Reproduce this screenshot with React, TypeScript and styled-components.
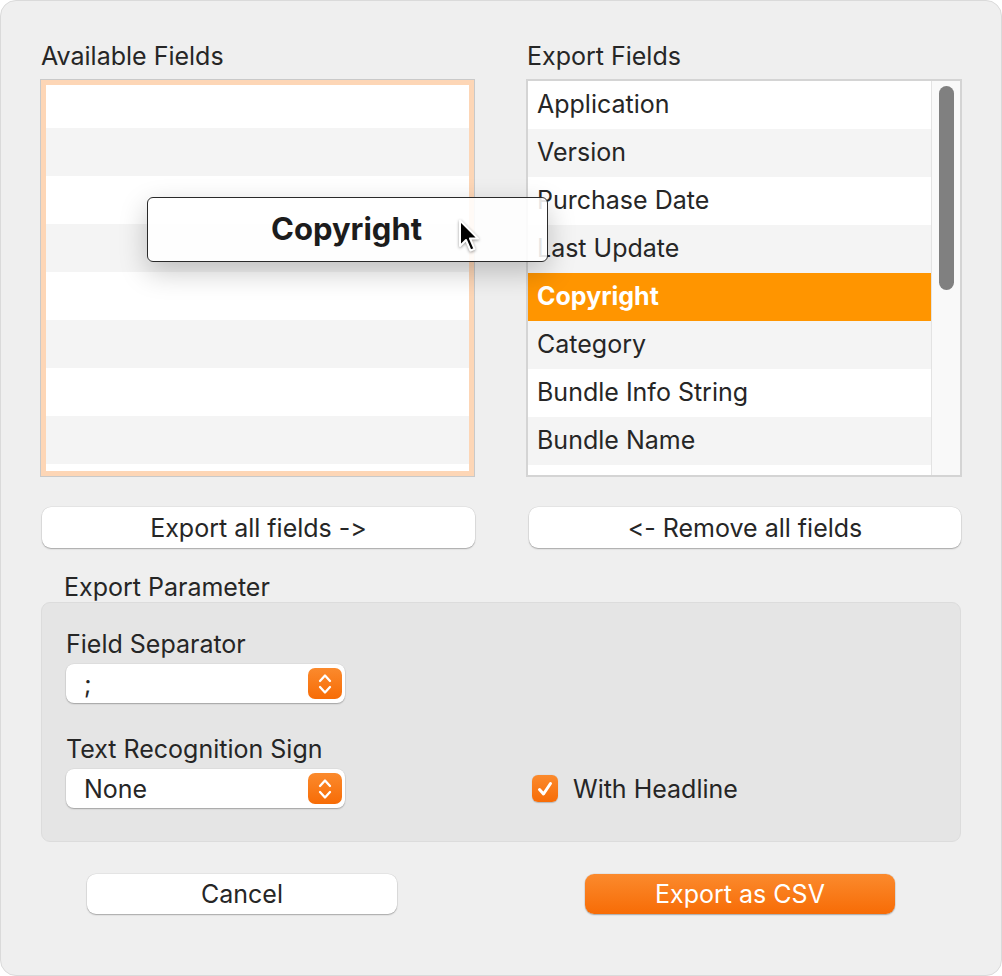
import React from "react";
import styled, { createGlobalStyle } from "styled-components";

const GlobalStyle = createGlobalStyle`
  html, body {
    margin: 0;
    padding: 0;
    background: #ffffff;
  }
  body {
    font-family: Inter, "Noto Sans", "Liberation Sans", sans-serif;
    font-feature-settings: "calt" 0, "liga" 0;
    -webkit-font-smoothing: antialiased;
  }
  button {
    font-feature-settings: "calt" 0, "liga" 0;
  }
`;

const Window = styled.div`
  position: relative;
  box-sizing: border-box;
  width: 1002px;
  height: 976px;
  padding: 42px 40px 0 40px;
  background: #efefef;
  border: 1px solid #dadada;
  border-radius: 16px;
  overflow: hidden;
  color: #262626;
  font-size: 25px;
`;

const Columns = styled.div`
  display: grid;
  grid-template-columns: 435px 436px;
  column-gap: 51px;
  margin-left: -1px;
`;

const Column = styled.div`
  display: flex;
  flex-direction: column;
`;

const Label = styled.div`
  height: 26px;
  line-height: 26px;
  padding-left: 1px;
  margin-bottom: 10px;
`;

const ListBox = styled.div<{ $focused?: boolean }>`
  position: relative;
  box-sizing: border-box;
  height: 398px;
  display: flex;
  background: #ffffff;
  border: ${({ $focused }) => ($focused ? "1px solid #c9c9c9" : "2px solid #d4d4d4")};
  overflow: hidden;

  &::after {
    content: "";
    position: absolute;
    inset: 0;
    pointer-events: none;
    box-shadow: ${({ $focused }) => ($focused ? "inset 0 0 0 5px #fdd6b6" : "none")};
  }
`;

const Rows = styled.div`
  flex: 1;
  display: flex;
  flex-direction: column;
`;

const Row = styled.div<{ $odd?: boolean; $selected?: boolean }>`
  flex: 0 0 48px;
  height: 48px;
  line-height: 47px;
  padding-left: 9px;
  box-sizing: border-box;
  white-space: nowrap;
  background: ${({ $odd, $selected }) =>
    $selected ? "#ff9500" : $odd ? "#f4f4f4" : "#ffffff"};
  color: ${({ $selected }) => ($selected ? "#ffffff" : "#262626")};
  font-weight: ${({ $selected }) => ($selected ? 700 : 400)};
`;

const ScrollTrack = styled.div`
  flex: 0 0 29px;
  background: #f9f9f9;
  border-left: 1px solid #e3e3e3;
  padding: 5px 0 0 7px;
  box-sizing: border-box;
`;

const ScrollThumb = styled.div`
  width: 15px;
  height: 204px;
  border-radius: 8px;
  background: #808080;
`;

const ButtonRow = styled.div`
  display: grid;
  grid-template-columns: 433px 432px;
  column-gap: 54px;
  margin-top: 30px;
  margin-left: 1px;
`;

const PushButton = styled.button<{ $primary?: boolean }>`
  height: 41px;
  padding: 0;
  border: none;
  border-radius: 9px;
  font-family: inherit;
  font-size: 25px;
  color: ${({ $primary }) => ($primary ? "#ffffff" : "#262626")};
  background: ${({ $primary }) =>
    $primary ? "linear-gradient(#fb8a2d, #f76c06)" : "#ffffff"};
  box-shadow: 0 1px 1.5px rgba(0, 0, 0, 0.28), 0 0 0 0.5px rgba(0, 0, 0, 0.08);
`;

const SectionTitle = styled.div`
  height: 26px;
  line-height: 26px;
  margin: 26px 0 2px 23px;
`;

const GroupBox = styled.div`
  box-sizing: border-box;
  height: 240px;
  padding: 28px 24px 0 24px;
  background: #e5e5e5;
  border: 1px solid #dcdcdc;
  border-radius: 9px;
  display: grid;
  grid-template-columns: 466px 1fr;
  grid-template-rows: auto auto;
  align-content: start;
  row-gap: 33px;
`;

const Field = styled.div`
  display: flex;
  flex-direction: column;
  gap: 7px;
`;

const FieldLabel = styled.div`
  height: 26px;
  line-height: 26px;
`;

const Select = styled.div`
  box-sizing: border-box;
  width: 279px;
  height: 39px;
  padding: 0 3px 0 18px;
  display: flex;
  align-items: center;
  justify-content: space-between;
  background: #ffffff;
  border-radius: 8px;
  box-shadow: 0 1px 1.5px rgba(0, 0, 0, 0.28), 0 0 0 0.5px rgba(0, 0, 0, 0.06);
`;

const Stepper = styled.div`
  width: 34px;
  height: 31px;
  border-radius: 7px;
  background: linear-gradient(#fb8a2d, #f76c06);
  display: flex;
  align-items: center;
  justify-content: center;
`;

const CheckCell = styled.label`
  align-self: end;
  height: 39px;
  display: flex;
  align-items: center;
  gap: 15px;
`;

const CheckBox = styled.span`
  width: 26px;
  height: 27px;
  border-radius: 6px;
  background: linear-gradient(#fb8a2d, #f76c06);
  display: flex;
  align-items: center;
  justify-content: center;
  box-shadow: 0 0.5px 1px rgba(0, 0, 0, 0.2);
`;

const Footer = styled.div`
  display: flex;
  gap: 188px;
  margin: 32px 0 0 46px;

  & > button {
    width: 310px;
    height: 40px;
  }
`;

const DragImage = styled.div`
  position: absolute;
  left: 146px;
  top: 196px;
  box-sizing: border-box;
  width: 401px;
  height: 65px;
  background: rgba(255, 255, 255, 0.88);
  border: 1px solid #2a2a2a;
  border-radius: 6px;
  box-shadow: 0 10px 28px rgba(0, 0, 0, 0.22);
  display: flex;
  align-items: center;
  justify-content: center;
  padding: 0 2px 2px 0;
  font-size: 31px;
  font-weight: 700;
  color: #1c1c1c;
`;

const Cursor = styled.svg`
  position: absolute;
  left: 457px;
  top: 218px;
  filter: drop-shadow(0 1px 1.5px rgba(0, 0, 0, 0.4));
`;

const availableRows = 8;
const exportFields = [
  "Application",
  "Version",
  "Purchase Date",
  "Last Update",
  "Copyright",
  "Category",
  "Bundle Info String",
  "Bundle Name",
  "",
];

const Chevrons = () => (
  <svg width="16" height="26" viewBox="0 0 16 26">
    <path
      d="M3 10 L8 4.5 L13 10 M3 16 L8 21.5 L13 16"
      fill="none"
      stroke="#ffffff"
      strokeWidth="2.3"
      strokeLinecap="round"
      strokeLinejoin="round"
    />
  </svg>
);

export default function App() {
  return (
    <>
      <GlobalStyle />
      <Window>
        <Columns>
          <Column>
            <Label>Available Fields</Label>
            <ListBox $focused>
              <Rows>
                {Array.from({ length: availableRows + 1 }).map((_, i) => (
                  <Row key={i} $odd={i % 2 === 1} />
                ))}
              </Rows>
            </ListBox>
          </Column>
          <Column>
            <Label>Export Fields</Label>
            <ListBox>
              <Rows>
                {exportFields.map((name, i) => (
                  <Row
                    key={name + i}
                    $odd={i % 2 === 1}
                    $selected={name === "Copyright"}
                  >
                    {name}
                  </Row>
                ))}
              </Rows>
              <ScrollTrack>
                <ScrollThumb />
              </ScrollTrack>
            </ListBox>
          </Column>
        </Columns>

        <ButtonRow>
          <PushButton>Export all fields -&gt;</PushButton>
          <PushButton>&lt;- Remove all fields</PushButton>
        </ButtonRow>

        <SectionTitle>Export Parameter</SectionTitle>
        <GroupBox>
          <Field>
            <FieldLabel>Field Separator</FieldLabel>
            <Select>
              <span>;</span>
              <Stepper>
                <Chevrons />
              </Stepper>
            </Select>
          </Field>
          <div />
          <Field>
            <FieldLabel>Text Recognition Sign</FieldLabel>
            <Select>
              <span>None</span>
              <Stepper>
                <Chevrons />
              </Stepper>
            </Select>
          </Field>
          <CheckCell>
            <CheckBox>
              <svg width="18" height="18" viewBox="0 0 18 18">
                <path
                  d="M3.5 9.5 L7.5 14 L14.5 3.5"
                  fill="none"
                  stroke="#ffffff"
                  strokeWidth="3"
                  strokeLinecap="round"
                  strokeLinejoin="round"
                />
              </svg>
            </CheckBox>
            With Headline
          </CheckCell>
        </GroupBox>

        <Footer>
          <PushButton>Cancel</PushButton>
          <PushButton $primary>Export as CSV</PushButton>
        </Footer>

        <DragImage>Copyright</DragImage>
        <Cursor width="22" height="36" viewBox="0 0 22 36">
          <path
            d="M2 1.5 L2 27 L8 21 L12.5 31.5 L16.5 29.8 L12 19.5 L20 19.5 Z"
            fill="#000000"
            stroke="#ffffff"
            strokeWidth="2"
            strokeLinejoin="round"
          />
        </Cursor>
      </Window>
    </>
  );
}
